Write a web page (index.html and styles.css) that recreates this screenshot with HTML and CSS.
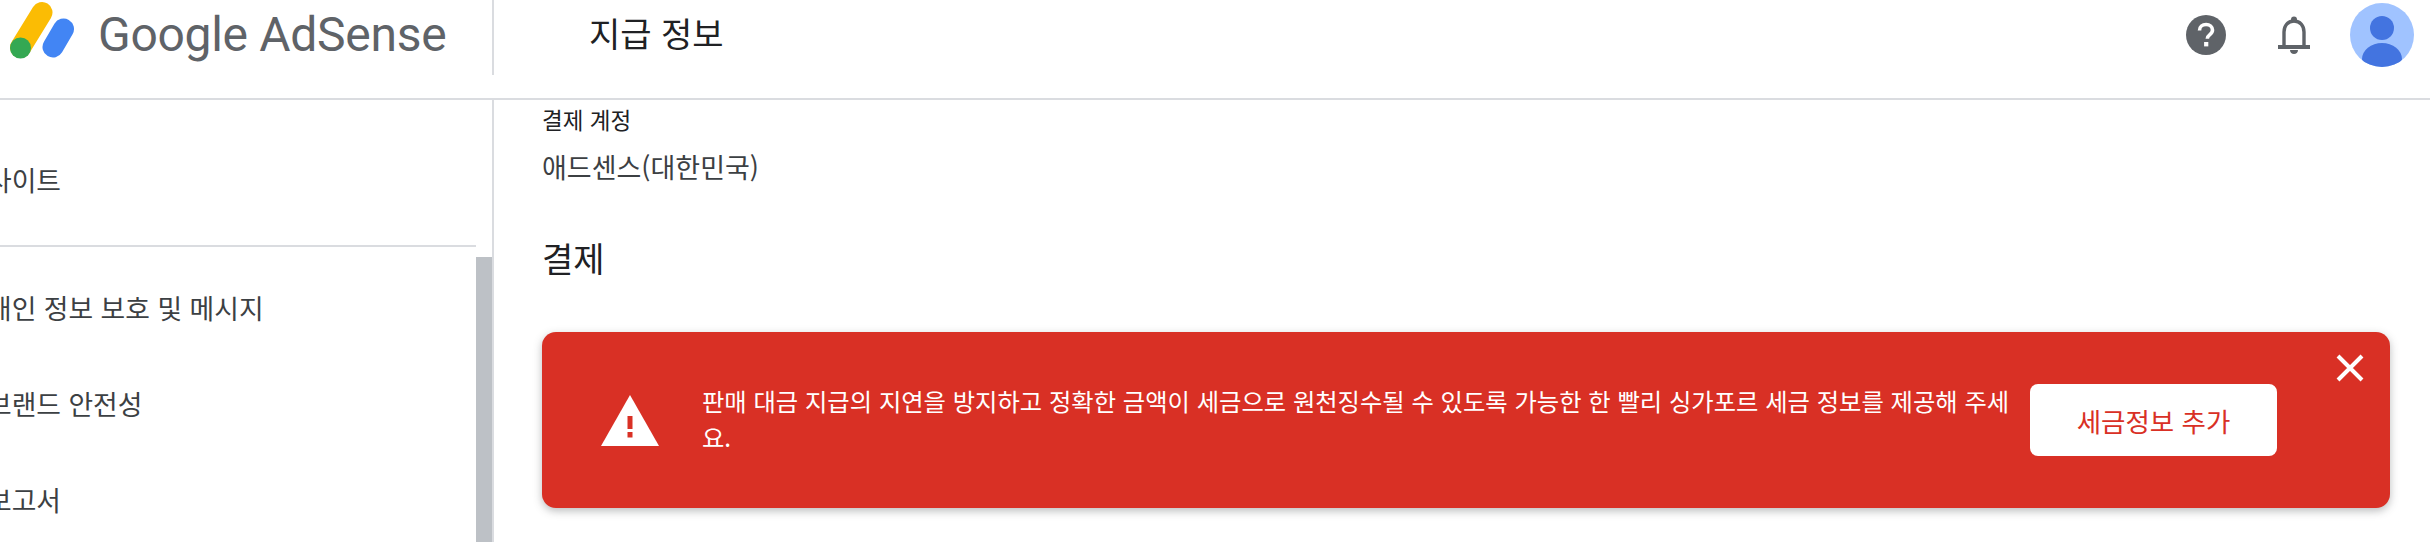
FILE: index.html
```html
<!DOCTYPE html>
<html lang="ko">
<head>
<meta charset="utf-8">
<title>지급 정보</title>
<link rel="stylesheet" href="styles.css">
</head>
<body>
<header class="topbar">
  <div class="brand">
    <svg class="logo" width="76" height="60" viewBox="0 0 76 60">
      <path class="logo-yellow" d="M42 12.500 L20.500 47.500" />
      <path class="logo-blue" d="M63.500 29 L53 47" />
      <circle class="logo-green" cx="20.500" cy="48" r="10.500" />
    </svg>
    <span class="wordmark">Google AdSense</span>
  </div>
  <h1 class="page-title">지급 정보</h1>
  <div class="actions">
    <svg class="icon-help" width="40" height="40" viewBox="0 0 40 40">
      <circle cx="20" cy="20" r="20" fill="#5f6368"/>
      <path d="M13.500 15.500c0-3.600 2.900-6 6.600-6 3.600 0 6.400 2.300 6.400 5.600 0 2.300-1.200 3.500-2.900 4.800-1.600 1.200-2.300 2-2.300 3.900" fill="none" stroke="#fff" stroke-width="3.600"/>
      <rect x="18.100" y="27" width="4.200" height="4.400" fill="#fff"/>
    </svg>
    <svg class="icon-bell" width="32" height="38" viewBox="0 0 32 38">
      <path d="M6 30V16C6 9.500 10 5 16 5s10 4.500 10 11v14" fill="none" stroke="#5f6368" stroke-width="3.400"/>
      <circle cx="16" cy="3.500" r="3" fill="#5f6368"/>
      <rect x="0" y="29" width="32" height="4" fill="#5f6368"/>
      <path d="M12 34h8c0 2.500-1.800 4-4 4s-4-1.500-4-4z" fill="#5f6368"/>
    </svg>
    <svg class="avatar" width="64" height="64" viewBox="0 0 64 64">
      <defs><clipPath id="avatar-clip"><circle cx="32" cy="32" r="32"/></clipPath></defs>
      <circle cx="32" cy="32" r="32" fill="#a0c3ff"/>
      <circle cx="32" cy="25" r="12" fill="#4374e0"/>
      <ellipse cx="32" cy="56" rx="20" ry="16" fill="#4374e0" clip-path="url(#avatar-clip)"/>
    </svg>
  </div>
</header>
<div class="layout">
  <aside class="sidebar">
    <nav class="nav">
      <div class="nav-item">사이트</div>
      <div class="nav-rule"></div>
      <div class="nav-item">개인 정보 보호 및 메시지</div>
      <div class="nav-item">브랜드 안전성</div>
      <div class="nav-item">보고서</div>
    </nav>
    <div class="track"><div class="thumb"></div></div>
  </aside>
  <main class="content">
    <div class="field-label">결제 계정</div>
    <div class="field-value">애드센스(대한민국)</div>
    <h2 class="section-title">결제</h2>
    <section class="alert">
      <svg class="alert-icon" width="58" height="51" viewBox="0 0 58 51">
        <path d="M29 0 L58 51 H0 Z" fill="#fff"/>
        <rect x="26.500" y="21" width="5" height="13" fill="#d93025"/>
        <rect x="26.500" y="37" width="5" height="5.500" fill="#d93025"/>
      </svg>
      <p class="alert-text">판매 대금 지급의 지연을 방지하고 정확한 금액이 세금으로 원천징수될 수 있도록 가능한 한 빨리 싱가포르 세금 정보를 제공해 주세요.</p>
      <button class="alert-button" type="button">세금정보 추가</button>
      <svg class="alert-close" width="28" height="28" viewBox="0 0 28 28">
        <path d="M2 2 L26 26 M26 2 L2 26" stroke="#fff" stroke-width="4" fill="none"/>
      </svg>
    </section>
  </main>
</div>
</body>
</html>
```

FILE: styles.css
```css
* { box-sizing: border-box; }
html, body { margin: 0; height: 542px; overflow: hidden; background: #fff; }
body { font-family: "Noto Sans CJK KR", "Liberation Sans", sans-serif; color: #3c4043; }

.topbar { display: flex; align-items: flex-start; height: 100px; border-bottom: 2px solid #dadce0; }
.brand { display: flex; width: 494px; height: 75px; border-right: 2px solid #dadce0; flex: none; }
.logo { flex: none; }
.logo-yellow { stroke: #fbbc04; stroke-width: 21; stroke-linecap: round; fill: none; }
.logo-blue { stroke: #4285f4; stroke-width: 21; stroke-linecap: round; fill: none; }
.logo-green { fill: #34a853; }
.wordmark { font-family: Roboto, sans-serif; font-size: 48px; line-height: 70px; color: #5f6368; margin-left: 22px; white-space: nowrap; letter-spacing: -0.3px; }
.page-title { margin: 8px 0 0 95px; font-size: 34px; line-height: 50px; font-weight: 400; color: #202124; white-space: nowrap; }
.actions { margin-left: auto; display: flex; align-items: center; padding: 3px 16px 0 0; }
.icon-help { margin-right: 52px; }
.icon-bell { margin-right: 40px; }

.layout { display: flex; height: 442px; }
.sidebar { display: flex; width: 494px; flex: none; border-right: 2px solid #dadce0; overflow: hidden; }
.nav { flex: 1; min-width: 0; padding-top: 32px; overflow: hidden; }
.nav-item { height: 96px; line-height: 96px; font-size: 26.800px; margin-left: -13px; white-space: nowrap; color: #3c4043; }
.nav-rule { height: 2px; background: #dadce0; margin: 17px 0 13px; }
.track { width: 16px; flex: none; }
.thumb { height: 400px; margin-top: 157px; background: #bdc1c6; }

.content { flex: 1; padding: 6px 40px 0 48px; min-width: 0; }
.field-label { font-size: 22.500px; line-height: 27px; color: #202124; }
.field-value { font-size: 27px; line-height: 36px; margin-top: 16px; }
.section-title { font-size: 34px; line-height: 48px; font-weight: 400; color: #202124; margin: 49px 0 0; }
.alert { position: relative; display: flex; align-items: center; height: 176px; margin-top: 50px; padding-left: 59px; background: #d93025; border-radius: 14px; box-shadow: 0 3px 8px rgba(60, 64, 67, .35); color: #fff; }
.alert-icon { flex: none; margin-right: 43px; }
.alert-text { width: 1311px; margin: -2px 0 0; font-size: 24.300px; line-height: 36px; color: #fff; }
.alert-button { width: 247px; height: 72px; margin-left: 17px; flex: none; border: 0; border-radius: 8px; background: #fff; color: #d93025; font: 400 26.500px "Noto Sans CJK KR", sans-serif; }
.alert-close { position: absolute; top: 22px; right: 26px; }
```
